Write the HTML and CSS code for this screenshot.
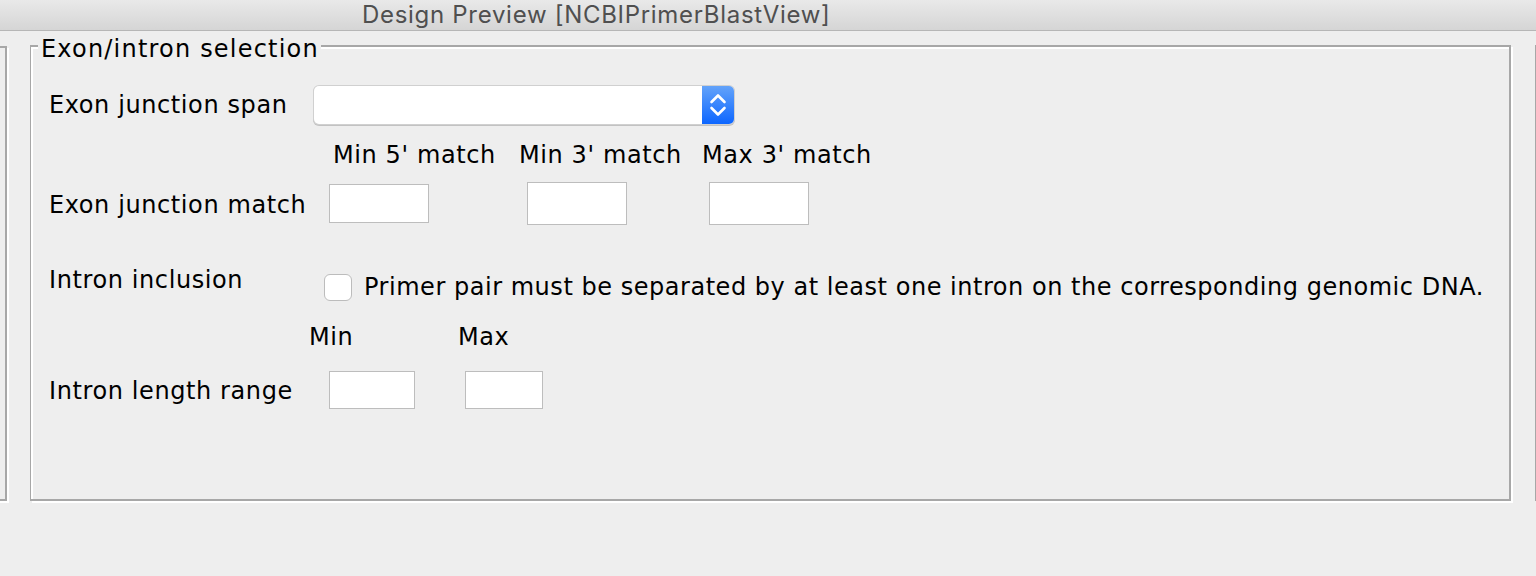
FILE: index.html
```html
<!DOCTYPE html>
<html>
<head>
<meta charset="utf-8">
<title>Design Preview [NCBIPrimerBlastView]</title>
<link rel="stylesheet" href="styles.css">
</head>
<body>
<div class="titlebar"><span class="title">Design Preview [NCBIPrimerBlastView]</span></div>
<div class="workspace">
  <div class="side-left"></div>
  <div class="group">
    <span class="group-title">Exon/intron selection</span>
    <div class="row row-span">
      <span class="lbl lbl-span">Exon junction span</span>
      <div class="combo">
        <div class="combo-field"></div>
        <div class="combo-btn">
          <svg width="18" height="26" viewBox="0 0 18 26"><path d="M2.5 10 L9 3.5 L15.5 10 M2.5 16 L9 22.5 L15.5 16" fill="none" stroke="#fff" stroke-width="2.6" stroke-linecap="round" stroke-linejoin="round"/></svg>
        </div>
      </div>
    </div>
    <div class="row row-heads">
      <span class="head head-1">Min 5' match</span>
      <span class="head head-2">Min 3' match</span>
      <span class="head">Max 3' match</span>
    </div>
    <div class="row row-match">
      <span class="lbl lbl-match">Exon junction match</span>
      <div class="field f-m1"></div>
      <div class="field f-m2"></div>
      <div class="field f-m3"></div>
    </div>
    <div class="row row-intron">
      <span class="lbl lbl-intron">Intron inclusion</span>
      <div class="check-wrap">
        <span class="checkbox"></span>
        <span class="check-text">Primer pair must be separated by at least one intron on the corresponding genomic DNA.</span>
      </div>
    </div>
    <div class="row row-minmax">
      <span class="head head-min">Min</span>
      <span class="head">Max</span>
    </div>
    <div class="row row-range">
      <span class="lbl lbl-range">Intron length range</span>
      <div class="field f-r1"></div>
      <div class="field f-r2"></div>
    </div>
  </div>
  <div class="side-right"></div>
</div>
</body>
</html>
```
FILE: styles.css
```css
html, body {
  margin: 0;
  padding: 0;
}
body {
  width: 1536px;
  height: 576px;
  overflow: hidden;
  background: #eeeeee;
  font-family: "DejaVu Sans", sans-serif;
  font-size: 24px;
  line-height: 28px;
  letter-spacing: 0.6px;
  color: #000;
}
.titlebar {
  height: 30px;
  border-bottom: 1px solid #b6b6b6;
  background: linear-gradient(#e9e9e9, #d5d5d5);
  display: flex;
  align-items: center;
  padding-left: 362px;
}
.title {
  font-family: Inter, "Liberation Sans", sans-serif;
  font-size: 24px;
  letter-spacing: 0.7px;
  color: #4f4f4f;
  line-height: 30px;
}
.workspace {
  display: flex;
  padding-top: 14px;
  height: 456px;
}
.side-left {
  margin-left: -20px;
  width: 25px;
  margin-top: 1px;
  border-top: 2px solid #a7a7a7;
  border-right: 2px solid #a7a7a7;
  border-bottom: 2px solid #a7a7a7;
  box-shadow: 2px 2px 0 #fff;
  flex: none;
}
.group {
  position: relative;
  margin-left: 23px;
  width: 1481px;
  box-sizing: border-box;
  border-style: solid;
  border-color: #a7a7a7;
  border-width: 2px 2px 2px 1px;
  box-shadow: 2px 2px 0 #fff, inset 2px 2px 0 #fff;
  padding: 38px 0 0 18px;
  flex: none;
}
.group-title {
  position: absolute;
  top: -12px;
  left: 7px;
  padding: 0 2px 0 3px;
  background: #eeeeee;
  white-space: nowrap;
  letter-spacing: 1.2px;
}
.side-right {
  margin-left: 24px;
  flex: 1;
  border-top: 2px solid #a7a7a7;
  border-left: 1px solid #a7a7a7;
  box-shadow: inset 1px 1px 0 #fff;
}
.row {
  display: flex;
  align-items: center;
  white-space: nowrap;
}
.lbl { flex: none; }
.lbl-span { width: 265px; }
.combo {
  width: 420px;
  height: 38px;
  margin: 1px 0;
  display: flex;
  border-radius: 5px;
  box-shadow: 0 0 0 1px #d0d0d0, 0 1px 0 1px #c2c2c2;
  overflow: hidden;
  background: #fff;
}
.combo-field { flex: 1; }
.combo-btn {
  width: 32px;
  background: linear-gradient(#63a3fa, #0d66ff);
  display: flex;
  align-items: center;
  justify-content: center;
}
.row-heads { margin-top: 16px; padding-left: 284px; }
.head-1 { width: 186px; }
.head-2 { width: 183px; }
.row-match { margin-top: 13px; height: 43px; }
.lbl-match { width: 280px; margin-top: 3px; }
.field {
  background: #fff;
  border: 1px solid #bdbdbd;
  box-sizing: border-box;
  flex: none;
}
.f-m1 { width: 100px; height: 39px; }
.f-m2 { width: 100px; height: 43px; margin-left: 98px; }
.f-m3 { width: 100px; height: 43px; margin-left: 82px; }
.row-intron { margin-top: 41px; align-items: flex-start; }
.lbl-intron { width: 275px; }
.check-wrap {
  display: flex;
  align-items: center;
  margin-top: 7px;
}
.checkbox {
  width: 28px;
  height: 27px;
  box-sizing: border-box;
  background: #fff;
  border: 1px solid #bcbcbc;
  border-radius: 6px;
  flex: none;
}
.check-text { margin-left: 12px; letter-spacing: 0.53px; }
.row-minmax { margin-top: 22px; padding-left: 260px; }
.head-min { width: 149px; }
.row-range { margin-top: 20px; height: 38px; }
.lbl-range { width: 280px; margin-top: 1px; }
.f-r1 { width: 86px; height: 38px; }
.f-r2 { width: 78px; height: 38px; margin-left: 50px; }
```
